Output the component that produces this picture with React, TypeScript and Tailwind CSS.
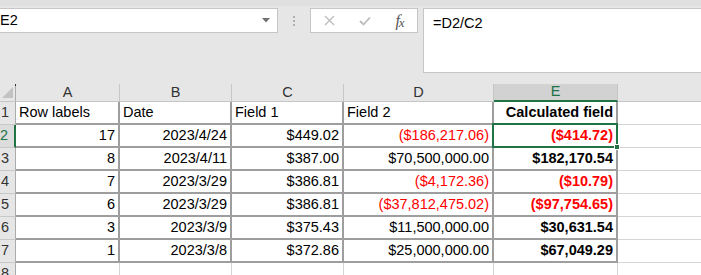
const COLS = ['A', 'B', 'C', 'D', 'E'];

// widths include the 2px right border of each cell
const COL_W = ['w-[104px]', 'w-[112px]', 'w-[112px]', 'w-[150px]', 'w-[124px]'];

const HEADERS = ['Row labels', 'Date', 'Field 1', 'Field 2', 'Calculated field'];

const ROWS: string[][] = [
  ['17', '2023/4/24', '$449.02', '($186,217.06)', '($414.72)'],
  ['8', '2023/4/11', '$387.00', '$70,500,000.00', '$182,170.54'],
  ['7', '2023/3/29', '$386.81', '($4,172.36)', '($10.79)'],
  ['6', '2023/3/29', '$386.81', '($37,812,475.02)', '($97,754.65)'],
  ['3', '2023/3/9', '$375.43', '$11,500,000.00', '$30,631.54'],
  ['1', '2023/3/8', '$372.86', '$25,000,000.00', '$67,049.29'],
];

function RowHeader({ n, active }: { n: number; active?: boolean }) {
  return (
    <div
      className={`w-[16px] h-[23px] shrink-0 flex items-center justify-end pr-[6px] overflow-hidden border-b border-b-[#c8c8c8] ${
        active
          ? 'bg-[#dcdcdc] text-[#217346] border-r-2 border-r-[#217346]'
          : 'bg-[#e6e6e6] text-[#333] border-r border-r-[#ababab]'
      }`}
    >
      {n}
    </div>
  );
}

export default function App() {
  return (
    <div className="w-[701px] h-[275px] overflow-hidden bg-[#e6e6e6] font-['Liberation_Sans',Arial,sans-serif] text-[14.5px] text-black">
      <div className="h-[6px] bg-[#e0e0e0]" />

      {/* FORMULA BAR */}
      <div className="flex items-start mt-[2px] h-[65px]">
        <div className="ml-[-4px] w-[282px] h-[25px] bg-white border border-[#c6c6c6] flex items-center pl-[3px] pr-[7px]">
          <span className="flex-1">E2</span>
          <svg width="8" height="5" viewBox="0 0 8 5">
            <path d="M0 0 L8 0 L4 4.5 Z" fill="#707070" />
          </svg>
        </div>
        <div className="w-[32px] h-[25px] flex flex-col items-center justify-center gap-[2px]">
          <span className="w-[2px] h-[2px] bg-[#b0b0b0]" />
          <span className="w-[2px] h-[2px] bg-[#b0b0b0]" />
          <span className="w-[2px] h-[2px] bg-[#b0b0b0]" />
        </div>
        <div className="w-[108px] h-[25px] bg-white border border-[#c6c6c6] flex items-center">
          <div className="w-[36px] flex justify-center">
            <svg width="11" height="11" viewBox="0 0 11 11">
              <path d="M1 1 L10 10 M10 1 L1 10" stroke="#bcbcbc" strokeWidth="1.3" />
            </svg>
          </div>
          <div className="w-[36px] flex justify-center">
            <svg width="12" height="10" viewBox="0 0 12 10">
              <path d="M1 5 L4.5 8.5 L11 1.5" stroke="#bcbcbc" strokeWidth="1.8" fill="none" />
            </svg>
          </div>
          <div className="w-[34px] flex justify-center items-start font-['Liberation_Serif',serif] italic text-[#555] text-[16px] leading-none">
            <span>f</span>
            <span className="text-[13px] mt-[3px] ml-[-1px]">x</span>
          </div>
        </div>
        <div className="ml-[5px] flex-1 h-[65px] bg-white border border-[#c6c6c6] mr-[-4px] pl-[9px] pt-[4px]">
          =D2/C2
        </div>
      </div>

      <div className="h-[11px]" />

      {/* SHEET */}
      <div className="relative">
        {/* column headers */}
        <div className="flex h-[18px]">
          <div className="relative w-[16px] h-[18px] shrink-0 border-r border-r-[#ababab] border-b border-b-[#c6c6c6]">
            <svg className="absolute left-[2px] top-[3px]" width="11" height="11" viewBox="0 0 11 11">
              <path d="M0 11 L11 11 L11 0 Z" fill="#c2c2c2" />
            </svg>
            <span className="absolute right-[-1px] top-0 w-[1px] h-[2px] bg-[#333]" />
          </div>
          {COLS.map((c, i) => (
            <div
              key={c}
              className={`${COL_W[i]} shrink-0 h-[18px] flex items-center justify-center border-r border-r-[#c6c6c6] ${
                c === 'E'
                  ? 'bg-[#d2d2d2] text-[#217346] border-b-2 border-b-[#217346]'
                  : 'text-[#333] border-b border-b-[#c6c6c6]'
              }`}
            >
              {c}
            </div>
          ))}
          <div className="flex-1 h-[18px] border-b border-b-[#c6c6c6]" />
        </div>

        {/* row 1 */}
        <div className="flex">
          <RowHeader n={1} />
          {HEADERS.map((h, i) => (
            <div
              key={h}
              className={`${COL_W[i]} shrink-0 h-[23px] bg-white border-r-2 border-b-2 border-[#9e9e9e] flex items-center px-[3px] pt-[1px] whitespace-nowrap ${
                i === 4 ? 'justify-end font-bold' : ''
              }`}
            >
              {h}
            </div>
          ))}
          <div className="flex-1 h-[23px] bg-white border-b border-b-[#d4d4d4]" />
        </div>

        {ROWS.map((r, ri) => (
          <div key={ri} className="flex">
            <RowHeader n={ri + 2} active={ri === 0} />
            {r.map((v, i) => (
              <div
                key={i}
                className={`${COL_W[i]} shrink-0 h-[23px] bg-white border-r-2 border-b-2 border-[#9e9e9e] flex items-center justify-end px-[3px] pt-[1px] whitespace-nowrap ${
                  v.startsWith('(') ? 'text-[#ff0000]' : ''
                } ${i === 4 ? 'font-bold' : ''}`}
              >
                {v}
              </div>
            ))}
            <div className="flex-1 h-[23px] bg-white border-b border-b-[#d4d4d4]" />
          </div>
        ))}

        {/* row 8 */}
        <div className="flex">
          <RowHeader n={8} />
          {COL_W.map((w, i) => (
            <div key={i} className={`${w} shrink-0 h-[23px] bg-white border-r border-r-[#d4d4d4]`} />
          ))}
          <div className="flex-1 h-[23px] bg-white" />
        </div>

        {/* selection E2 */}
        <div className="absolute left-[492px] top-[39px] w-[126px] h-[25px] border-2 border-[#217346] pointer-events-none" />
        <div className="absolute left-[614px] top-[60px] w-[6px] h-[6px] bg-[#217346] border border-white pointer-events-none" />
      </div>
    </div>
  );
}
